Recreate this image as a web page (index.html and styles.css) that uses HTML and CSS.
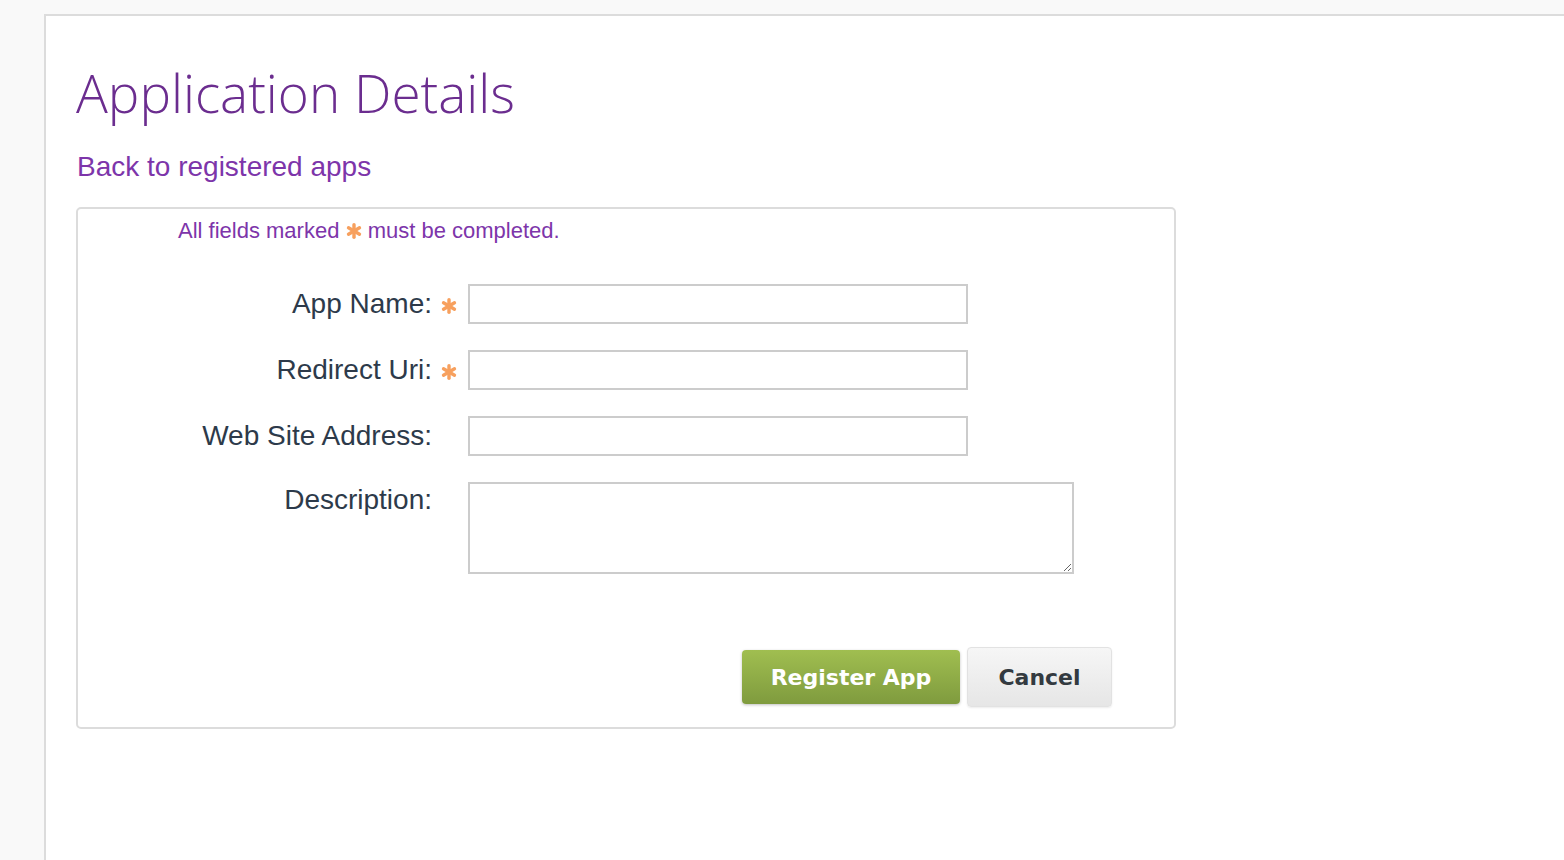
FILE: index.html
```html
<!DOCTYPE html>
<html>
<head>
<meta charset="utf-8">
<link rel="stylesheet" href="styles.css">
</head>
<body>
<div class="page">
  <h1 class="title">Application Details</h1>
  <a class="back" href="#">Back to registered apps</a>
  <div class="form-box">
    <p class="note">All fields marked <svg class="star" viewBox="0 0 14 14"><g stroke="#f7a05e" stroke-width="3" stroke-linecap="round"><line x1="7" y1="1.5" x2="7" y2="12.5"/><line x1="2.2" y1="4.2" x2="11.8" y2="9.8"/><line x1="2.2" y1="9.8" x2="11.8" y2="4.2"/></g></svg> must be completed.</p>
    <div class="fields">
      <label class="lbl">App Name:</label>
      <span class="req"><svg class="star" viewBox="0 0 14 14"><g stroke="#f7a05e" stroke-width="3" stroke-linecap="round"><line x1="7" y1="1.5" x2="7" y2="12.5"/><line x1="2.2" y1="4.2" x2="11.8" y2="9.8"/><line x1="2.2" y1="9.8" x2="11.8" y2="4.2"/></g></svg></span>
      <input class="inp" type="text">

      <label class="lbl">Redirect Uri:</label>
      <span class="req"><svg class="star" viewBox="0 0 14 14"><g stroke="#f7a05e" stroke-width="3" stroke-linecap="round"><line x1="7" y1="1.5" x2="7" y2="12.5"/><line x1="2.2" y1="4.2" x2="11.8" y2="9.8"/><line x1="2.2" y1="9.8" x2="11.8" y2="4.2"/></g></svg></span>
      <input class="inp" type="text">

      <label class="lbl">Web Site Address:</label>
      <span class="req"></span>
      <input class="inp" type="text">

      <label class="lbl lbl-top">Description:</label>
      <span class="req"></span>
      <textarea class="area"></textarea>
    </div>
    <div class="actions">
      <button class="btn btn-primary">Register App</button>
      <button class="btn btn-cancel">Cancel</button>
    </div>
  </div>
</div>
</body>
</html>
```
FILE: styles.css
```css
html, body {
  margin: 0;
  padding: 0;
  background: #f9f9f9;
  height: 100%;
}
body {
  padding-top: 14px;
  box-sizing: border-box;
  overflow: hidden;
}
.page {
  margin-left: 44px;
  background: #ffffff;
  border-left: 2px solid #dcdcdc;
  border-top: 2px solid #dcdcdc;
  height: 846px;
  padding-left: 30px;
  padding-top: 44px;
  box-sizing: border-box;
  font-family: "Liberation Sans", Arial, sans-serif;
}
.title {
  margin: 0 0 0 0;
  font-family: "Open Sans", sans-serif;
  font-weight: 300;
  font-size: 53px;
  line-height: 66px;
  color: #6b2d8f;
}
.back {
  display: block;
  margin: 25px 0 0 1px;
  font-size: 28px;
  line-height: 32px;
  color: #7d35aa;
  text-decoration: none;
  width: max-content;
}
.form-box {
  margin-top: 24px;
  width: 1100px;
  height: 522px;
  box-sizing: border-box;
  border: 2px solid #dcdcdc;
  border-radius: 5px;
}
.note {
  margin: 8px 0 0 100px;
  font-size: 22px;
  line-height: 28px;
  color: #7d35aa;
}
.note .star {
  width: 16px;
  height: 16px;
  vertical-align: -1px;
}
.fields {
  margin-top: 39px;
  display: grid;
  grid-template-columns: 354px 36px auto;
  row-gap: 26px;
  align-items: center;
}
.lbl {
  text-align: right;
  font-size: 28px;
  color: #2d3a4a;
  line-height: 32px;
}
.lbl-top {
  align-self: start;
  padding-top: 2px;
}
.req {
  padding-left: 9px;
  display: flex;
  align-items: center;
  padding-top: 4px;
}
.req .star {
  width: 16px;
  height: 16px;
}
.inp {
  width: 500px;
  height: 40px;
  box-sizing: border-box;
  border: 2px solid #cccccc;
  margin: 0;
  padding: 0 6px;
  font-size: 18px;
  justify-self: start;
}
.area {
  width: 606px;
  height: 92px;
  box-sizing: border-box;
  border: 2px solid #cccccc;
  margin: 0;
  padding: 4px;
  justify-self: start;
  display: block;
}
.actions {
  margin-top: 73px;
  display: flex;
  align-items: center;
  padding-left: 664px;
  gap: 7px;
}
.btn {
  font-family: "DejaVu Sans", Verdana, sans-serif;
  font-weight: bold;
  font-size: 22px;
  cursor: pointer;
  border-radius: 4px;
  padding: 0;
}
.btn-primary {
  width: 218px;
  height: 54px;
  color: #ffffff;
  border: 0;
  background: linear-gradient(#a0be50, #7f9b3e);
  box-shadow: 0 1px 3px rgba(0, 0, 0, 0.25);
}
.btn-cancel {
  width: 145px;
  height: 60px;
  color: #333a40;
  border: 1px solid #e2e2e2;
  background: linear-gradient(#f6f6f6, #e6e6e6);
  box-shadow: 0 1px 2px rgba(0, 0, 0, 0.08);
}
```
